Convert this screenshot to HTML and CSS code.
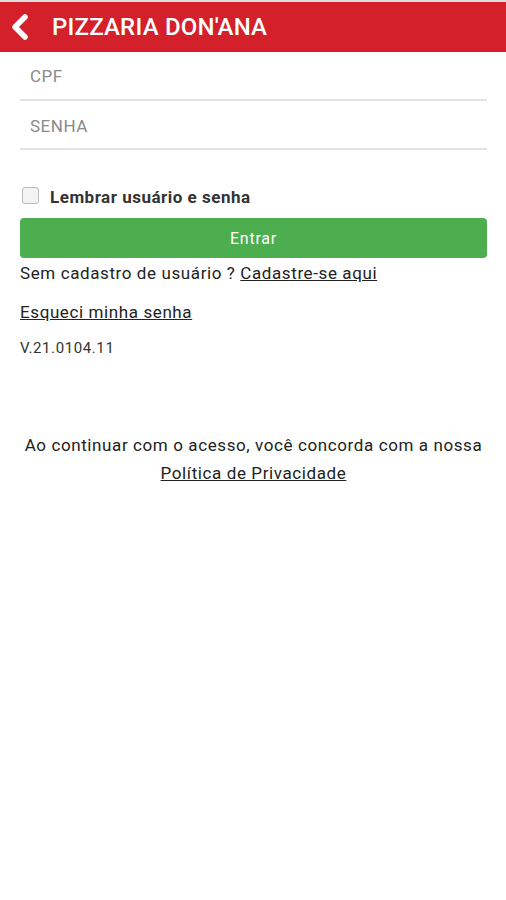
FILE: index.html
```html
<!DOCTYPE html>
<html lang="pt-BR">
<head>
    <meta charset="UTF-8">
    <meta name="viewport" content="width=device-width, initial-scale=1.0">
    <title>Pizzaria Don'Ana</title>
    <link rel="stylesheet" href="styles.css">
</head>
<body>
    <header class="topbar">
        <svg class="back" width="22" height="26" viewBox="0 0 22 26">
            <path d="M17 3 L7 13 L17 23" fill="none" stroke="#fff" stroke-width="5.5" stroke-linecap="round" stroke-linejoin="round"/>
        </svg>
        <h1>PIZZARIA DON'ANA</h1>
    </header>
    <main class="login">
        <form class="login-form">
            <input class="field" type="text" placeholder="CPF">
            <input class="field field-pass" type="password" placeholder="SENHA">

            <label class="remember">
                <span class="box"></span>
                Lembrar usuário e senha
            </label>

            <button type="button" class="btn">Entrar</button>
        </form>
        <p class="signup">Sem cadastro de usuário ? <a href="#">Cadastre-se aqui</a></p>
        <p class="forgot"><a href="#">Esqueci minha senha</a></p>
        <p class="version">V.21.0104.11</p>
        <p class="privacy">Ao continuar com o acesso, você concorda com a nossa<br><a href="#">Política de Privacidade</a></p>
    </main>
</body>
</html>
```

FILE: styles.css
```css
body {
    font-family: Roboto, "Noto Sans", sans-serif;
    margin: 0;
    padding: 0;
    background: #fff;
    color: #222;
}

.topbar {
    background-color: #d4202a;
    border-top: 2px solid #ddd;
    height: 50px;
    display: flex;
    align-items: center;
    padding-left: 8px;
}

.topbar .back {
    margin-right: 22px;
}

.topbar h1 {
    margin: 0;
    color: #fff;
    font-size: 24px;
    font-weight: 500;
    letter-spacing: 0.2px;
}

.login {
    padding: 0 19px 0 20px;
}

.login-form {
    display: flex;
    flex-direction: column;
}

.field {
    height: 47px;
    border: none;
    border-bottom: 2px solid #e2e2e2;
    padding: 0 10px;
    font-family: inherit;
    font-size: 17px;
    letter-spacing: 0.5px;
    outline: none;
    background: transparent;
}

.field-pass {
    padding-top: 2px;
    height: 45px;
}

.field::placeholder {
    color: #8a8a8a;
}

.remember {
    display: flex;
    align-items: center;
    margin-top: 37px;
    font-size: 17px;
    font-weight: bold;
    letter-spacing: 0.5px;
    color: #333;
}

.remember .box {
    width: 15px;
    height: 15px;
    border: 1px solid #bbb;
    border-radius: 3px;
    background: #f3f3f3;
    margin: 0 11px 0 2px;
    position: relative;
    top: -2px;
}

.btn {
    margin-top: 11px;
    height: 40px;
    background-color: #4cae4f;
    color: #fff;
    border: none;
    border-radius: 4px;
    font-family: inherit;
    font-size: 16px;
    letter-spacing: 0.8px;
    cursor: pointer;
}

.login p {
    margin: 0;
    letter-spacing: 0.6px;
}

.login a {
    color: #222;
}

.signup {
    margin-top: 4px !important;
    font-size: 17px;
    line-height: 22px;
}

.forgot {
    margin-top: 17px !important;
    font-size: 17px;
    line-height: 22px;
}

.version {
    margin-top: 16px !important;
    font-size: 15px;
    color: #333;
}

.privacy {
    margin-top: 74px !important;
    text-align: center;
    font-size: 17px;
    line-height: 28px;
}
```
